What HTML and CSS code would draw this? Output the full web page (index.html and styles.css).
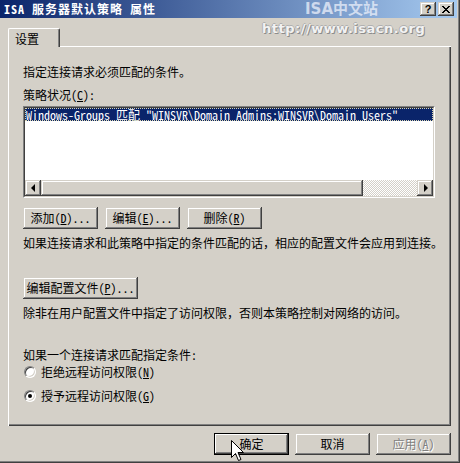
FILE: index.html
```html
<!DOCTYPE html>
<html>
<head>
  <meta charset="utf-8">
  <title>ISA 服务器默认策略 属性</title>
  <link rel="stylesheet" href="styles.css">
</head>
<body>
  <div class="window">
    <div class="titlebar">
      <span class="title">ISA 服务器默认策略 属性</span>
      <div class="caption-buttons">
        <span class="caption-btn help">?</span>
        <span class="caption-btn">
          <svg width="8" height="7" viewBox="0 0 8 7"><path d="M0 0h2v1h-2z M6 0h2v1h-2z M1 1h2v1h-2z M5 1h2v1h-2z M2 2h4v1h-4z M3 3h2v1h-2z M2 4h4v1h-4z M1 5h2v1h-2z M5 5h2v1h-2z M0 6h2v1h-2z M6 6h2v1h-2z"/></svg>
        </span>
      </div>
    </div>

    <div class="tabs">
      <div class="tab">设置</div>
    </div>

    <div class="panel">
      <p class="intro">指定连接请求必须匹配的条件。</p>
      <p class="list-label">策略状况(<u>C</u>):</p>

      <div class="listbox">
        <div class="list-inner">
          <div class="list-items">
            <div class="item selected">Windows-Groups 匹配 "WINSVR\Domain Admins;WINSVR\Domain Users"</div>
          </div>
          <div class="hscroll">
            <span class="scroll-btn"><span class="arrow-left"></span></span>
            <span class="thumb"></span>
            <span class="track"></span>
            <span class="scroll-btn"><span class="arrow-right"></span></span>
          </div>
        </div>
      </div>

      <div class="btn-row">
        <button class="btn">添加(<u>D</u>)...</button>
        <button class="btn">编辑(<u>E</u>)...</button>
        <button class="btn">删除(<u>R</u>)</button>
      </div>

      <p class="match-note">如果连接请求和此策略中指定的条件匹配的话，相应的配置文件会应用到连接。</p>

      <div class="profile-row">
        <button class="btn btn-wide">编辑配置文件(<u>P</u>)...</button>
      </div>

      <p class="profile-note">除非在用户配置文件中指定了访问权限，否则本策略控制对网络的访问。</p>

      <p class="cond-label">如果一个连接请求匹配指定条件:</p>
      <div class="radio-row">
        <span class="radio"></span>
        <span>拒绝远程访问权限(<u>N</u>)</span>
      </div>
      <div class="radio-row">
        <span class="radio checked"></span>
        <span>授予远程访问权限(<u>G</u>)</span>
      </div>
    </div>

    <div class="footer">
      <button class="btn btn-default">确定</button>
      <button class="btn">取消</button>
      <button class="btn disabled">应用(<u>A</u>)</button>
    </div>

    <div class="watermark wm-title">ISA中文站</div>
    <div class="watermark wm-url">http://www.isacn.org</div>

    <svg class="cursor" width="13" height="22" viewBox="0 0 13 22">
      <path d="M0.5 0.5 V17.5 L4.5 13.5 L7.5 20.5 L10 19.5 L7 12.5 H12.5 Z" fill="#fff" stroke="#000" stroke-width="1"/>
    </svg>
  </div>
</body>
</html>
```

FILE: styles.css
```css
body {
  margin: 0;
  background: #d4d0c8;
  font-family: "Noto Sans Mono CJK SC", "Noto Sans CJK SC", sans-serif;
  font-size: 12px;
  line-height: 14px;
  color: #000;
}

p {
  margin: 0;
}

.window {
  position: relative;
  width: 460px;
  height: 463px;
  box-sizing: border-box;
  padding: 0 3px 3px 0;
  overflow: hidden;
  background: #d4d0c8;
  box-shadow: inset -1px -1px #404040, inset -2px -2px #808080;
}

/* title bar */
.titlebar {
  height: 18px;
  display: flex;
  align-items: center;
  padding: 0 3px 0 4px;
  background: linear-gradient(to right, #0a246a, #a6caf0);
  color: #fff;
}

.title {
  flex: 1;
  font-weight: bold;
  letter-spacing: 1px;
}

.caption-buttons {
  display: flex;
  gap: 2px;
}

.caption-btn {
  width: 16px;
  height: 14px;
  display: flex;
  align-items: center;
  justify-content: center;
  background: #d4d0c8;
  color: #000;
  box-shadow: inset -1px -1px #404040, inset 1px 1px #d4d0c8, inset -2px -2px #808080, inset 2px 2px #fff;
}

.help {
  font-family: "Liberation Sans", sans-serif;
  font-weight: bold;
  font-size: 11px;
}

/* tab */
.tabs {
  display: flex;
  height: 18px;
  margin-top: 10px;
  padding-left: 8px;
}

.tab {
  position: relative;
  z-index: 1;
  width: 52px;
  height: 19px;
  box-sizing: border-box;
  padding: 3px 0 0 6px;
  background: #d4d0c8;
  border-top: 1px solid #fff;
  border-left: 1px solid #fff;
  border-right: 1px solid #404040;
  border-radius: 2px 2px 0 0;
  box-shadow: inset -1px 0 #808080;
}

.panel {
  width: 443px;
  height: 380px;
  margin-left: 8px;
  box-sizing: border-box;
  padding: 19px 0 0 15px;
  box-shadow: inset 1px 1px #fff, inset -1px -1px #404040, inset -2px -2px #808080;
}

.intro {
  margin-bottom: 9px;
}

.list-label {
  margin-bottom: 4px;
}

/* list box */
.listbox {
  width: 412px;
  height: 92px;
  box-sizing: border-box;
  margin-bottom: 9px;
  border: 1px solid;
  border-color: #808080 #fff #fff #808080;
}

.list-inner {
  height: 100%;
  box-sizing: border-box;
  display: flex;
  flex-direction: column;
  background: #fff;
  border: 1px solid;
  border-color: #404040 #d4d0c8 #d4d0c8 #404040;
}

.list-items {
  flex: 1;
}

.item {
  height: 13px;
  line-height: 13px;
  padding-left: 1px;
  white-space: nowrap;
}

.selected {
  background: #0a246a;
  color: #fff;
  outline: 1px dotted #d8d4b0;
  outline-offset: -1px;
}

.hscroll {
  height: 16px;
  display: flex;
}

.scroll-btn,
.thumb {
  background: #d4d0c8;
  box-shadow: inset -1px -1px #404040, inset 1px 1px #d4d0c8, inset -2px -2px #808080, inset 2px 2px #fff;
}

.scroll-btn {
  width: 16px;
  display: flex;
  align-items: center;
  justify-content: center;
}

.arrow-left {
  border-right: 4px solid #000;
  border-top: 4px solid transparent;
  border-bottom: 4px solid transparent;
  margin-left: -1px;
}

.arrow-right {
  border-left: 4px solid #000;
  border-top: 4px solid transparent;
  border-bottom: 4px solid transparent;
  margin-left: 1px;
}

.thumb {
  width: 322px;
}

.track {
  flex: 1;
  background: repeating-conic-gradient(#fff 0 25%, #d4d0c8 0 50%) 0 0 / 2px 2px;
}

/* buttons */
.btn {
  width: 75px;
  height: 22px;
  padding: 0;
  border: none;
  background: #d4d0c8;
  font: inherit;
  color: #000;
  box-shadow: inset -1px -1px #404040, inset 1px 1px #d4d0c8, inset -2px -2px #808080, inset 2px 2px #fff;
}

.btn-row {
  display: flex;
  gap: 7px;
  margin-bottom: 7px;
}

.btn-wide {
  width: 115px;
}

.match-note {
  margin-bottom: 27px;
}

.profile-row {
  margin-bottom: 7px;
}

.profile-note {
  margin-bottom: 28px;
}

.cond-label {
  margin-bottom: 3px;
}

/* radios */
.radio-row {
  display: flex;
  align-items: center;
  gap: 5px;
  height: 14px;
  padding-left: 1px;
}

.radio-row + .radio-row {
  margin-top: 10px;
}

.radio {
  position: relative;
  width: 12px;
  height: 12px;
  box-sizing: border-box;
  border-radius: 50%;
  border: 1px solid;
  border-color: #808080 #fff #fff #808080;
  background: #fff;
  box-shadow: inset 1px 1px #404040, inset -1px -1px #d4d0c8;
}

.checked::after {
  content: "";
  position: absolute;
  left: 3px;
  top: 3px;
  width: 4px;
  height: 4px;
  border-radius: 50%;
  background: #000;
}

/* footer */
.footer {
  display: flex;
  justify-content: flex-end;
  gap: 6px;
  margin-top: 7px;
  padding-right: 6px;
}

.btn-default {
  box-shadow: inset 0 0 0 1px #000, inset -2px -2px #404040, inset 2px 2px #fff, inset -3px -3px #808080;
}

.disabled {
  color: #808080;
  text-shadow: 1px 1px #fff;
}

/* watermark and pointer over the dialog */
.watermark {
  position: absolute;
  font-family: "DejaVu Sans", "Noto Sans CJK SC", sans-serif;
  font-weight: bold;
  white-space: nowrap;
}

.wm-title {
  left: 305px;
  top: 1px;
  font-size: 15px;
  line-height: 17px;
  color: rgba(236, 240, 250, 0.75);
}

.wm-url {
  left: 262px;
  top: 21px;
  font-size: 13px;
  line-height: 16px;
  letter-spacing: 0.5px;
  color: #f2f2f2;
  text-shadow: 1px 1px #8c8c8c, -1px 0 #b0b0b0, 0 -1px #b0b0b0;
}

.cursor {
  position: absolute;
  left: 231px;
  top: 440px;
}
```
